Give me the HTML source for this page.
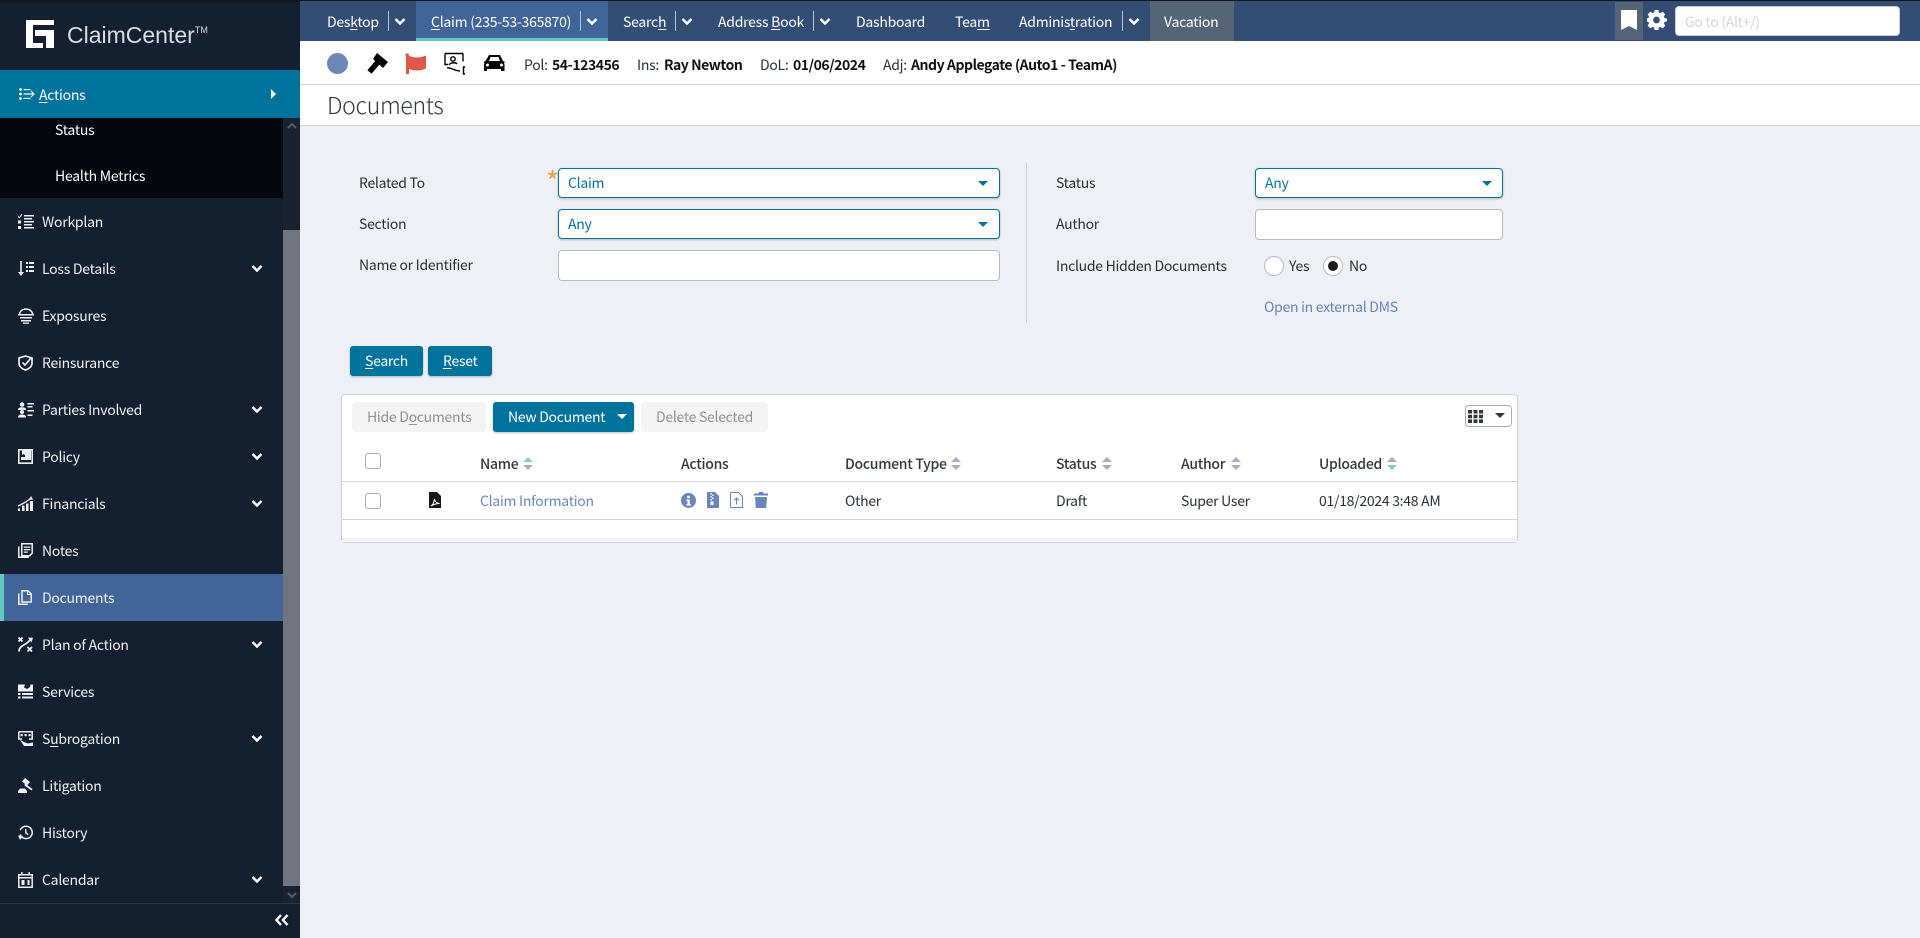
<!DOCTYPE html>
<html><head><meta charset="utf-8"><title>ClaimCenter</title>
<style>
html,body{margin:0;padding:0;width:1920px;height:938px;overflow:hidden;background:#eff0f5}
body{position:relative;font-family:"Noto Sans CJK JP","Liberation Sans",sans-serif;font-size:14px;letter-spacing:-.28px;color:#2b2f36}
div,span.t,a.t,svg.a{position:absolute}
.t{position:absolute;white-space:nowrap;line-height:20px;height:20px}
u{text-underline-offset:2px}
.nav{color:#fff;letter-spacing:-.25px}
.side{color:#eef0f3;letter-spacing:-.25px}
.lb{color:#2b2f36}
.b{font-weight:700;color:#111;letter-spacing:-.45px}
.sel{background:#fff;border:1px solid #00739d;border-radius:4px;box-sizing:border-box;height:30px;box-shadow:0 1px 2px rgba(0,0,0,.25)}
.inp{background:#fff;border:1px solid #b9bbc1;border-radius:4px;box-sizing:border-box;height:31px}
.car{width:0;height:0;border-left:5px solid transparent;border-right:5px solid transparent;border-top:5px solid #00739d}
.btn{background:#00739d;border-radius:3px;box-shadow:0 1px 2px rgba(0,0,0,.25)}
.dis{background:#f4f4f5;border-radius:3px}
.cb{background:#fff;border:1px solid #a9abb1;border-radius:3px;box-sizing:border-box;width:16px;height:16px}
.th{font-weight:500;color:#33373d}
.td{color:#2b2f36}
.link{color:#6a86b8}
.sep{width:1px;height:20px;top:11px;background:#b7c2d3}
</style></head><body>

<!-- sidebar -->
<div style="left:0;top:0;width:300px;height:938px;background:#141f2f"></div>
<div style="left:0;top:0;width:300px;height:2px;background:#14161b"></div>
<svg class="a" style="left:26px;top:20px" width="28" height="28" viewBox="0 0 28 28"><path fill="#fff" d="M0 0H28V5H7V23H17V28H0Z M9 10H28V28H20V16H9Z"/></svg>
<span class="t" style="left:67px;top:23px;color:#d9dde3;font:300 23px/24px 'Liberation Sans',sans-serif;letter-spacing:0;height:24px">ClaimCenter<sup style="font-size:9px;line-height:0;vertical-align:10px;letter-spacing:0">TM</sup></span>

<div style="left:0;top:70px;width:300px;height:48px;background:#00739d"></div>
<svg class="a" style="left:19px;top:88px" width="16" height="12" viewBox="0 0 16 12"><g fill="#fff"><circle cx="1.500" cy="1.500" r="1.400"/><circle cx="1.500" cy="6" r="1.400"/><circle cx="1.500" cy="10.500" r="1.400"/><rect x="4.500" y="1" width="7" height="1.200"/><rect x="4.500" y="5.400" width="10" height="1.200"/><rect x="4.500" y="9.800" width="7" height="1.200"/></g><path d="M12 3l3 3-3 3" fill="none" stroke="#fff"/></svg>
<span class="t side" style="left:39px;top:85px;color:#fff"><u>A</u>ctions</span>
<div style="left:271px;top:89px;width:0;height:0;border-top:5px solid transparent;border-bottom:5px solid transparent;border-left:5px solid #fff"></div>

<div style="left:0;top:118px;width:283px;height:80px;background:#05070f"></div>
<span class="t side" style="left:55px;top:120px;color:#fff">Status</span>
<span class="t side" style="left:55px;top:166px;color:#fff">Health Metrics</span>

<div style="left:283px;top:118px;width:17px;height:112px;background:#1a2230"></div>
<div style="left:283px;top:230px;width:17px;height:656px;background:#6f747e"></div>
<div style="left:283px;top:886px;width:17px;height:17px;background:#1a2230"></div>
<svg class="a" style="left:287px;top:122px" width="10" height="8" viewBox="0 0 10 8"><path d="M1 6l4-4 4 4" fill="none" stroke="#565c66" stroke-width="2"/></svg>
<svg class="a" style="left:287px;top:891px" width="10" height="8" viewBox="0 0 10 8"><path d="M1 2l4 4 4-4" fill="none" stroke="#565c66" stroke-width="2"/></svg>
<div style="left:0;top:903px;width:300px;height:1px;background:#2c3748"></div>
<svg class="a" style="left:275px;top:914px" width="14" height="12" viewBox="0 0 14 12"><path d="M6 1L1.500 6 6 11M12.500 1L8 6l4.500 5" fill="none" stroke="#fff" stroke-width="2.400"/></svg>

<div style="left:0;top:574px;width:283px;height:47px;background:#416499"></div>
<div style="left:0;top:574px;width:4px;height:47px;background:#63c8bf"></div>

<!-- side icons -->
<svg class="a" style="left:18px;top:214px" width="16" height="16" viewBox="0 0 16 16"><g fill="#eef0f3"><path d="M0 1.500l1.300 1.500L3.600 0l.8.600L1.400 4.500 0 3z"/><rect x="0" y="6.500" width="3" height="3"/><rect x="0" y="12" width="3" height="3"/><rect x="6" y="1" width="10" height="1.500"/><rect x="6" y="4" width="8" height="1.500"/><rect x="6" y="7" width="10" height="1.500"/><rect x="6" y="10" width="8" height="1.500"/><rect x="6" y="13" width="10" height="1.500"/></g></svg>
<svg class="a" style="left:18px;top:261px" width="16" height="16" viewBox="0 0 16 16"><g fill="#eef0f3"><rect x="2.200" y="0" width="1.600" height="12"/><path d="M0 11h6l-3 4z"/><rect x="8" y="1" width="2" height="2"/><rect x="8" y="5" width="2" height="2"/><rect x="8" y="9" width="2" height="2"/><rect x="11" y="1" width="5" height="2"/><rect x="11" y="5" width="5" height="2"/><rect x="11" y="9" width="5" height="2"/></g></svg>
<svg class="a" style="left:18px;top:308px" width="16" height="16" viewBox="0 0 16 16"><path d="M1.500 6.500a6.500 5.500 0 0 1 13 0" fill="none" stroke="#eef0f3" stroke-width="1.500"/><g fill="#eef0f3"><rect x="0" y="6" width="16" height="1.500"/><rect x="2" y="9" width="12" height="1.500"/><rect x="3" y="12" width="10" height="1.500"/><rect x="5" y="14.500" width="6" height="1.300"/></g></svg>
<svg class="a" style="left:18px;top:355px" width="15" height="16" viewBox="0 0 15 16"><path d="M7.500 1L14 3v5c0 3.500-3 6-6.500 7C4 14 1 11.500 1 8V3z" fill="none" stroke="#eef0f3" stroke-width="1.700"/><path d="M4.500 7.500l2.500 2.500 6-7" fill="none" stroke="#eef0f3" stroke-width="1.700"/></svg>
<svg class="a" style="left:18px;top:402px" width="16" height="16" viewBox="0 0 16 16"><g fill="#eef0f3"><circle cx="4" cy="2.500" r="2.300"/><path d="M0 8c0-2 1.500-2.700 4-2.700S8 6 8 8z"/><circle cx="4" cy="10" r="2"/><path d="M0 15.500c0-2 1.500-3 4-3s4 1 4 3z"/><rect x="9.500" y="1" width="6.500" height="1.500"/><rect x="9.500" y="4" width="5" height="1.500"/><rect x="9.500" y="8" width="6.500" height="1.500"/><rect x="9.500" y="12.500" width="5" height="1.500"/></g></svg>
<svg class="a" style="left:18px;top:449px" width="15" height="15" viewBox="0 0 15 15"><path d="M.8.800h13.400v13.400H.8z" fill="none" stroke="#eef0f3" stroke-width="1.600"/><path d="M7 1h6v10H3V8h4V1z" fill="#eef0f3"/><path d="M4 1h3v5L5.500 5 4 6z" fill="#eef0f3"/></svg>
<svg class="a" style="left:18px;top:496px" width="15" height="15" viewBox="0 0 15 15"><g fill="#eef0f3"><rect x="0" y="12.500" width="2" height="2.500"/><rect x="4" y="9.500" width="2.500" height="5.500"/><rect x="8" y="7.500" width="2.500" height="7.500"/><rect x="12" y="5" width="3" height="10"/><path d="M13 0l2 3.500-4 .3z"/></g><path d="M0 10C4 8 9 6 13 2" fill="none" stroke="#eef0f3" stroke-width="1.300"/></svg>
<svg class="a" style="left:18px;top:543px" width="15" height="15" viewBox="0 0 15 15"><path d="M3.800.800h10.400v9.400l-2.500 2.500H3.800zM.8 3.500V14.200h10" fill="none" stroke="#eef0f3" stroke-width="1.500"/><g fill="#eef0f3"><rect x="5.800" y="3.500" width="6.500" height="1.300"/><rect x="5.800" y="6" width="6.500" height="1.300"/><rect x="5.800" y="8.500" width="4" height="1.300"/></g></svg>
<svg class="a" style="left:18px;top:590px" width="14" height="15" viewBox="0 0 14 15"><path d="M4 .800h6l3.200 3.200v8H4zM.8 3.500V14.200h9" fill="none" stroke="#eef0f3" stroke-width="1.500"/><path d="M9.500 1v3.500h3.500" fill="none" stroke="#eef0f3"/></svg>
<svg class="a" style="left:18px;top:637px" width="15" height="15" viewBox="0 0 15 15"><path d="M.5.500l4 4M4.500.500l-4 4M9.500 10l4.500 4.500M14 10l-4.500 4.500M1 14.500C1 10 5 8.500 7.500 7s3.500-2.500 4.500-4" fill="none" stroke="#eef0f3" stroke-width="1.800"/><path d="M10 .500L15 .8 13.500 5.500z" fill="#eef0f3"/></svg>
<svg class="a" style="left:18px;top:684px" width="15" height="15" viewBox="0 0 15 15"><g fill="#eef0f3"><path d="M0 .500h7l-1 3 3 1.500 3-2 .5-2.500H15v7H0z"/><rect x="0" y="9" width="2.500" height="2"/><rect x="4" y="9" width="11" height="2"/><rect x="0" y="12.500" width="2.500" height="2"/><rect x="4" y="12.500" width="11" height="2"/></g></svg>
<svg class="a" style="left:18px;top:731px" width="15" height="15" viewBox="0 0 15 15"><path d="M.8.800h13.400V8H11M4 8H.8V.800" fill="none" stroke="#eef0f3" stroke-width="1.500"/><g fill="#eef0f3"><rect x="2.500" y="3" width="2.200" height="2.200"/><rect x="6.500" y="3" width="2.200" height="2.200"/><rect x="10.500" y="3" width="2.200" height="2.200"/><path d="M2 9l5 2.500 3 1 5-1V15H6z"/></g></svg>
<svg class="a" style="left:18px;top:778px" width="15" height="15" viewBox="0 0 15 15"><g fill="#eef0f3"><path d="M7 0l5 4-3 3.500-5-4z"/><path d="M7 5l1.500 1.500 6 4.500-1 1.500-7-5z"/><rect x="0" y="12.500" width="9" height="2.500"/><path d="M2 10.500h5l1.500 2H.5z"/></g></svg>
<svg class="a" style="left:18px;top:825px" width="15" height="15" viewBox="0 0 15 15"><path d="M2.200 9.500A6.200 6.200 0 1 0 3.500 3.200L2 5" fill="none" stroke="#eef0f3" stroke-width="1.500"/><path d="M7.800 4v4l2.500 1.500" fill="none" stroke="#eef0f3" stroke-width="1.400"/><path d="M0 10.500l5 .5-3 4z" fill="#eef0f3"/></svg>
<svg class="a" style="left:18px;top:872px" width="15" height="16" viewBox="0 0 15 16"><path d="M.8 2.800h13.400v12.400H.8z" fill="none" stroke="#eef0f3" stroke-width="1.500"/><g fill="#eef0f3"><rect x="3" y="0" width="1.600" height="3"/><rect x="10.400" y="0" width="1.600" height="3"/><rect x="1" y="5" width="13" height="1.500"/><rect x="3.500" y="8" width="3" height="5"/><rect x="9.500" y="8" width="2" height="5"/></g></svg>

<!-- side labels -->
<span class="t side" style="left:42px;top:212px">Workplan</span>
<span class="t side" style="left:42px;top:259px">Loss Details</span>
<span class="t side" style="left:42px;top:306px">Exposures</span>
<span class="t side" style="left:42px;top:353px">Reinsurance</span>
<span class="t side" style="left:42px;top:400px">Parties Involved</span>
<span class="t side" style="left:42px;top:447px">Policy</span>
<span class="t side" style="left:42px;top:494px">Financials</span>
<span class="t side" style="left:42px;top:541px">Notes</span>
<span class="t side" style="left:42px;top:588px">Documents</span>
<span class="t side" style="left:42px;top:635px">Plan of Action</span>
<span class="t side" style="left:42px;top:682px">Services</span>
<span class="t side" style="left:42px;top:729px">S<u>u</u>brogation</span>
<span class="t side" style="left:42px;top:776px">Litigation</span>
<span class="t side" style="left:42px;top:823px">History</span>
<span class="t side" style="left:42px;top:870px">Calendar</span>
<!-- side chevrons -->
<svg class="a" style="left:251px;top:264px" width="12" height="9" viewBox="0 0 12 9"><path d="M1.500 2l4.500 4.500L10.500 2" fill="none" stroke="#fff" stroke-width="2.400"/></svg>
<svg class="a" style="left:251px;top:405px" width="12" height="9" viewBox="0 0 12 9"><path d="M1.500 2l4.500 4.500L10.500 2" fill="none" stroke="#fff" stroke-width="2.400"/></svg>
<svg class="a" style="left:251px;top:452px" width="12" height="9" viewBox="0 0 12 9"><path d="M1.500 2l4.500 4.500L10.500 2" fill="none" stroke="#fff" stroke-width="2.400"/></svg>
<svg class="a" style="left:251px;top:499px" width="12" height="9" viewBox="0 0 12 9"><path d="M1.500 2l4.500 4.500L10.500 2" fill="none" stroke="#fff" stroke-width="2.400"/></svg>
<svg class="a" style="left:251px;top:640px" width="12" height="9" viewBox="0 0 12 9"><path d="M1.500 2l4.500 4.500L10.500 2" fill="none" stroke="#fff" stroke-width="2.400"/></svg>
<svg class="a" style="left:251px;top:734px" width="12" height="9" viewBox="0 0 12 9"><path d="M1.500 2l4.500 4.500L10.500 2" fill="none" stroke="#fff" stroke-width="2.400"/></svg>
<svg class="a" style="left:251px;top:875px" width="12" height="9" viewBox="0 0 12 9"><path d="M1.500 2l4.500 4.500L10.500 2" fill="none" stroke="#fff" stroke-width="2.400"/></svg>

<!-- top nav -->
<div style="left:300px;top:0;width:1620px;height:41px;background:#334d75"></div>
<div style="left:300px;top:0;width:1620px;height:1px;background:#14161b"></div>
<div style="left:416px;top:1px;width:192px;height:40px;background:#416499"></div>
<div style="left:416px;top:38px;width:192px;height:3px;background:#63c8bf"></div>
<div style="left:1150px;top:1px;width:84px;height:40px;background:#566478"></div>
<div style="left:1615px;top:2px;width:28px;height:38px;background:#566478"></div>
<span class="t nav" style="left:327px;top:12px">Des<u>k</u>top</span>
<span class="t nav" style="left:431px;top:12px"><u>C</u>laim (235-53-365870)</span>
<span class="t nav" style="left:623px;top:12px">Searc<u>h</u></span>
<span class="t nav" style="left:718px;top:12px">Address <u>B</u>ook</span>
<span class="t nav" style="left:856px;top:12px">Dashboard</span>
<span class="t nav" style="left:955px;top:12px">Tea<u>m</u></span>
<span class="t nav" style="left:1019px;top:12px">Adminis<u>t</u>ration</span>
<span class="t nav" style="left:1164px;top:12px">Vacation</span>
<div class="sep" style="left:388px"></div><div class="sep" style="left:580px"></div><div class="sep" style="left:675px"></div><div class="sep" style="left:813px"></div><div class="sep" style="left:1122px"></div>
<svg class="a" style="left:394px;top:17px" width="12" height="9" viewBox="0 0 12 9"><path d="M1.500 2l4.500 4.500L10.500 2" fill="none" stroke="#fff" stroke-width="2.400"/></svg>
<svg class="a" style="left:586px;top:17px" width="12" height="9" viewBox="0 0 12 9"><path d="M1.500 2l4.500 4.500L10.500 2" fill="none" stroke="#fff" stroke-width="2.400"/></svg>
<svg class="a" style="left:681px;top:17px" width="12" height="9" viewBox="0 0 12 9"><path d="M1.500 2l4.500 4.500L10.500 2" fill="none" stroke="#fff" stroke-width="2.400"/></svg>
<svg class="a" style="left:819px;top:17px" width="12" height="9" viewBox="0 0 12 9"><path d="M1.500 2l4.500 4.500L10.500 2" fill="none" stroke="#fff" stroke-width="2.400"/></svg>
<svg class="a" style="left:1128px;top:17px" width="12" height="9" viewBox="0 0 12 9"><path d="M1.500 2l4.500 4.500L10.500 2" fill="none" stroke="#fff" stroke-width="2.400"/></svg>
<svg class="a" style="left:1621px;top:10px" width="16" height="21" viewBox="0 0 16 21"><path d="M0 0H16V20L8 16 0 20Z" fill="#fff"/></svg>
<svg class="a" style="left:1647px;top:10px" width="20" height="20" viewBox="0 0 20 20"><path fill="#fff" fill-rule="evenodd" d="M8 0h4l.5 2.600 1.700.7L16.500 1.800l2.800 2.800-1.500 2.300.7 1.700L21 9v3l-2.500.5-.7 1.700 1.500 2.300-2.800 2.800-2.300-1.500-1.700.7L12 21H8l-.5-2.500-1.700-.7-2.300 1.500L.7 16.500l1.500-2.300-.7-1.700L-1 12V9l2.500-.4.700-1.700L.7 4.600 3.500 1.800 5.800 3.300l1.700-.7zM10 7a3.500 3.500 0 1 0 0 7 3.500 3.500 0 0 0 0-7z" transform="scale(.95)"/></svg>
<div style="left:1675px;top:6px;width:225px;height:30px;background:#fff;border-radius:4px;border:1px solid #c8ccd4;box-sizing:border-box"></div>
<span class="t" style="left:1685px;top:12px;color:#d4d5d8">Go to (Alt+/)</span>

<!-- entity row -->
<div style="left:300px;top:41px;width:1620px;height:43px;background:#fff"></div>
<div style="left:300px;top:84px;width:1620px;height:1px;background:#d5d5d8"></div>
<div style="left:300px;top:85px;width:1620px;height:40px;background:#fff"></div>
<div style="left:300px;top:125px;width:1620px;height:1px;background:#d5d5d8"></div>
<div style="left:327px;top:53px;width:21px;height:21px;border-radius:50%;background:#6d88b7"></div>
<svg class="a" style="left:366px;top:53px" width="22" height="22" viewBox="0 0 22 22"><path fill="#000" d="M11 0L22 9 17 15 7 6z"/><path d="M12 9L3.500 19" stroke="#000" stroke-width="5.500" fill="none"/></svg>
<svg class="a" style="left:405px;top:53px" width="23" height="22" viewBox="0 0 23 22"><circle cx="2.200" cy="2" r="1.800" fill="#e0574a"/><path fill="#e0574a" d="M1 3h3v18H1zM4 3c6 2 11 2 17-.5v13c-6 2.500-11 2.500-17 .5z"/></svg>
<svg class="a" style="left:444px;top:52px" width="22" height="23" viewBox="0 0 22 23"><g fill="none" stroke="#000" stroke-width="1.400"><path d="M1 1.500h18M1 1.500v11h3M19 1.500v8"/><circle cx="9" cy="7" r="2.200"/><path d="M5 13c1-2.500 7-3 8-1M3 16c4-1 7 3 13 3M21 15h-1.500v7H21"/></g></svg>
<svg class="a" style="left:484px;top:54px" width="21" height="19" viewBox="0 0 21 19"><path fill="#000" fill-rule="evenodd" d="M5 1h11l3 6 2 1-1 1 .500 1.500V17h-3.500v-2h-14v2H0V10.500L.5 9l-1-1 2-1zM6.500 3L5 7h11l-1.500-4zM3.500 9.500a1.500 1.500 0 1 0 0 3 1.500 1.500 0 0 0 0-3zM17.500 9.500a1.500 1.500 0 1 0 0 3 1.500 1.500 0 0 0 0-3z"/></svg>
<span class="t lb" style="left:524px;top:55px">Pol:</span><span class="t b" style="left:552px;top:55px">54-123456</span>
<span class="t lb" style="left:637px;top:55px">Ins:</span><span class="t b" style="left:664px;top:55px">Ray Newton</span>
<span class="t lb" style="left:760px;top:55px">DoL:</span><span class="t b" style="left:793px;top:55px">01/06/2024</span>
<span class="t lb" style="left:883px;top:55px">Adj:</span><span class="t b" style="left:911px;top:55px">Andy Applegate (Auto1 - TeamA)</span>
<span class="t" style="left:327px;top:89px;font-size:23px;letter-spacing:-.3px;line-height:30px;height:30px;font-weight:300;color:#33373d">Documents</span>

<!-- form -->
<span class="t lb" style="left:359px;top:173px">Related To</span>
<span class="t lb" style="left:359px;top:214px">Section</span>
<span class="t lb" style="left:359px;top:255px">Name or Identifier</span>
<span class="t" style="left:546px;top:171px;color:#f0a040;font-size:28px">*</span>
<div class="sel" style="left:558px;top:168px;width:442px"></div><div class="sel" style="left:558px;top:209px;width:442px"></div><div class="inp" style="left:558px;top:250px;width:442px"></div>
<span class="t" style="left:568px;top:173px;color:#00739d">Claim</span>
<span class="t" style="left:568px;top:214px;color:#00739d">Any</span>
<div class="car" style="left:978px;top:181px"></div><div class="car" style="left:978px;top:222px"></div>
<div style="left:1026px;top:163px;width:1px;height:160px;background:#d2d3d7"></div>
<span class="t lb" style="left:1056px;top:173px">Status</span>
<span class="t lb" style="left:1056px;top:214px">Author</span>
<span class="t lb" style="left:1056px;top:256px">Include Hidden Documents</span>
<div class="sel" style="left:1255px;top:168px;width:248px"></div><div class="inp" style="left:1255px;top:209px;width:248px"></div>
<span class="t" style="left:1265px;top:173px;color:#00739d">Any</span>
<div class="car" style="left:1482px;top:181px"></div>
<div style="left:1264px;top:256px;width:20px;height:20px;border-radius:50%;background:#fff;border:1px solid #b9bbc1;box-sizing:border-box"></div>
<span class="t lb" style="left:1289px;top:256px">Yes</span>
<div style="left:1323px;top:256px;width:20px;height:20px;border-radius:50%;background:#fff;border:1px solid #b9bbc1;box-sizing:border-box"></div>
<div style="left:1328px;top:261px;width:10px;height:10px;border-radius:50%;background:#1c1c1e"></div>
<span class="t lb" style="left:1349px;top:256px">No</span>
<span class="t link" style="left:1264px;top:297px">Open in external DMS</span>
<div class="btn" style="left:350px;top:346px;width:73px;height:30px"></div><div class="btn" style="left:428px;top:346px;width:64px;height:30px"></div>
<span class="t" style="left:365px;top:351px;color:#fff"><u>S</u>earch</span>
<span class="t" style="left:443px;top:351px;color:#fff"><u>R</u>eset</span>

<!-- table card -->
<div style="left:341px;top:394px;width:1177px;height:149px;background:#fff;border:1px solid #d2d3d7;border-radius:4px;box-sizing:border-box"></div>
<div style="left:342px;top:538px;width:1175px;height:4px;background:#f3f3f5"></div>
<div class="dis" style="left:352px;top:402px;width:134px;height:30px"></div>
<div class="btn" style="left:493px;top:402px;width:141px;height:30px"></div>
<div class="dis" style="left:641px;top:402px;width:127px;height:30px"></div>
<span class="t" style="left:367px;top:407px;color:#8f9195">Hide D<u>o</u>cuments</span>
<span class="t" style="left:508px;top:407px;color:#fff">New Document</span>
<div style="left:617px;top:414px;width:0;height:0;border-left:5px solid transparent;border-right:5px solid transparent;border-top:5px solid #fff"></div>
<span class="t" style="left:656px;top:407px;color:#8f9195">Delete Selected</span>
<div style="left:1465px;top:405px;width:47px;height:22px;border:1px solid #a9abb1;border-radius:4px;box-sizing:border-box;background:#fff"></div>
<svg class="a" style="left:1468px;top:410px" width="15" height="13" viewBox="0 0 15 13"><path fill="#33373d" d="M0 0h4v3.500H0zM5.500 0h4v3.500h-4zM11 0h4v3.500h-4zM0 4.700h4v3.500H0zM5.500 4.700h4v3.500h-4zM11 4.700h4v3.500h-4zM0 9.400h4V13H0zM5.500 9.400h4V13h-4zM11 9.400h4V13h-4z"/></svg>
<div style="left:1495px;top:413px;width:0;height:0;border-left:5px solid transparent;border-right:5px solid transparent;border-top:5px solid #33373d"></div>

<div class="cb" style="left:365px;top:453px"></div>
<span class="t th" style="left:480px;top:454px">Name</span>
<span class="t th" style="left:681px;top:454px">Actions</span>
<span class="t th" style="left:845px;top:454px">Document Type</span>
<span class="t th" style="left:1056px;top:454px">Status</span>
<span class="t th" style="left:1181px;top:454px">Author</span>
<span class="t th" style="left:1319px;top:454px">Uploaded</span>
<svg class="a" style="left:523px;top:456px" width="10" height="15" viewBox="0 0 10 15"><path d="M0 6l5-5 5 5z" fill="#7fd2cb"/><path d="M0 9h10l-5 5z" fill="#a8adba"/></svg>
<svg class="a" style="left:951px;top:456px" width="10" height="15" viewBox="0 0 10 15"><path d="M0 6l5-5 5 5z" fill="#a8adba"/><path d="M0 9h10l-5 5z" fill="#a8adba"/></svg>
<svg class="a" style="left:1102px;top:456px" width="10" height="15" viewBox="0 0 10 15"><path d="M0 6l5-5 5 5z" fill="#a8adba"/><path d="M0 9h10l-5 5z" fill="#a8adba"/></svg>
<svg class="a" style="left:1231px;top:456px" width="10" height="15" viewBox="0 0 10 15"><path d="M0 6l5-5 5 5z" fill="#a8adba"/><path d="M0 9h10l-5 5z" fill="#a8adba"/></svg>
<svg class="a" style="left:1387px;top:456px" width="10" height="15" viewBox="0 0 10 15"><path d="M0 6l5-5 5 5z" fill="#a8adba"/><path d="M0 9h10l-5 5z" fill="#7fd2cb"/></svg>
<div style="left:342px;top:481px;width:1175px;height:1px;background:#d5d5d8"></div>
<div style="left:342px;top:519px;width:1175px;height:1px;background:#d5d5d8"></div>

<div class="cb" style="left:365px;top:493px"></div>
<svg class="a" style="left:429px;top:492px" width="12" height="16" viewBox="0 0 12 16"><path fill="#16181c" d="M0 0h8l4 4v12H0z"/><path d="M2 14c2-1 3-4 3.500-7 .500 3 2 4 5 4.500-3 0-6 1-8.500 2.500z" fill="none" stroke="#fff" stroke-width="1"/></svg>
<span class="t link" style="left:480px;top:491px">Claim Information</span>
<svg class="a" style="left:681px;top:493px" width="15" height="15" viewBox="0 0 15 15"><circle cx="7.500" cy="7.500" r="7.500" fill="#6a86b8"/><rect x="6.200" y="2.800" width="2.600" height="2.400" fill="#fff"/><path d="M5.500 6.500h3.300v4.500h1V12.500H5.500V11h1V8h-1z" fill="#fff"/></svg>
<svg class="a" style="left:707px;top:492px" width="12" height="16" viewBox="0 0 12 16"><path fill="#6a86b8" d="M0 0h8l4 4v12H0z"/><path fill="#fff" d="M3.500 1h1.500v1.500H3.500zM5 2.500h1.500V4H5zM3.500 4H5v1.500H3.500zM5 5.500h1.500V7H5zM3.500 7H5v1.500H3.500zM3.500 9.500h3V13h-3z"/></svg>
<svg class="a" style="left:730px;top:492px" width="13" height="16" viewBox="0 0 13 16"><path fill="none" stroke="#6a86b8" d="M.5.500h8l4 4v11H.5z"/><path fill="none" stroke="#6a86b8" d="M6.500 12.500V6M4 8.500l2.500-2.500L9 8.500"/></svg>
<svg class="a" style="left:754px;top:492px" width="14" height="16" viewBox="0 0 14 16"><path fill="#6a86b8" d="M0 1.500h4.500L5 0h4l.5 1.500H14v2H0zM1 5h12l-.8 11H1.800z"/></svg>
<span class="t td" style="left:845px;top:491px">Other</span>
<span class="t td" style="left:1056px;top:491px">Draft</span>
<span class="t td" style="left:1181px;top:491px">Super User</span>
<span class="t td" style="left:1319px;top:491px">01/18/2024 3:48 AM</span>
</body></html>
